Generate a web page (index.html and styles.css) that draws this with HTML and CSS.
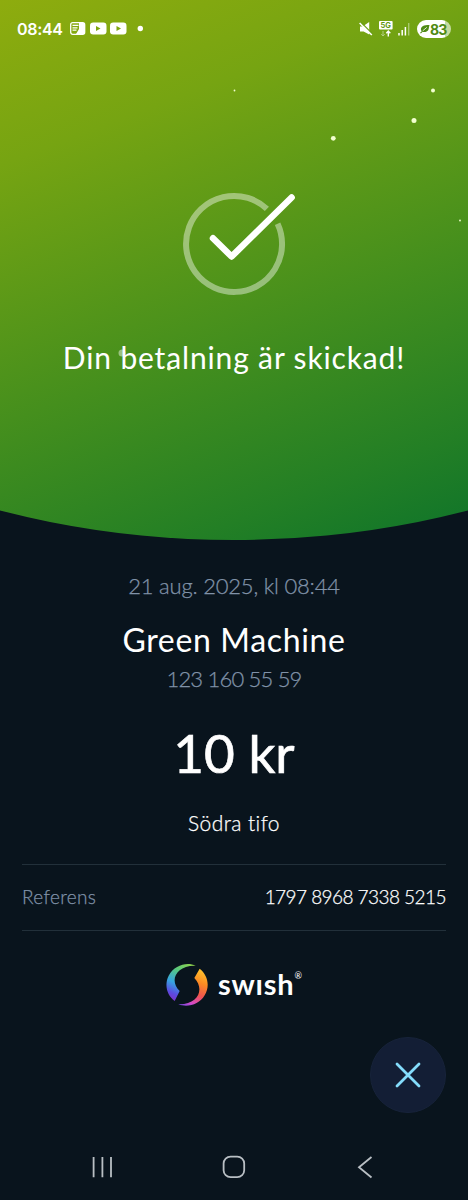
FILE: index.html
```html
<!DOCTYPE html>
<html lang="sv">
<head>
    <meta charset="UTF-8">
    <meta name="viewport" content="width=device-width, initial-scale=1.0">
    <title>Swish</title>
    <link rel="stylesheet" href="styles.css">
</head>
<body>
    <header class="hero">
        <svg class="stars" viewBox="0 0 468 540">
            <circle cx="234.5" cy="90.5" r="0.9"/>
            <circle cx="433" cy="90.5" r="2"/>
            <circle cx="414" cy="120.5" r="2.5"/>
            <circle cx="333.3" cy="138.3" r="2.4"/>
            <circle cx="460" cy="220.5" r="0.9"/>
            <circle class="faint" cx="122" cy="353" r="3.5"/>
            <circle cx="169" cy="368.5" r="2"/>
        </svg>

        <div class="status-bar">
            <div class="status-left">
                <span class="clock">08:44</span>
                <svg class="apps" width="76" height="14" viewBox="0 0 76 14">
                    <rect x="0.7" y="0.7" width="14" height="11.6" rx="2" fill="none" stroke="#fff" stroke-width="1.3"/>
                    <path d="M9 1h6v11H6l3-5z" fill="#fff"/>
                    <path d="M2.5 3.4h6M2.5 5.8h5M2.5 8.2h4" stroke="#fff" stroke-width="1.2"/>
                    <rect x="20" y="0.5" width="16.5" height="12" rx="3.2" fill="#fff"/>
                    <path d="M26 4v5l4.5-2.5z" fill="#7ea60f"/>
                    <rect x="40" y="0.5" width="16.5" height="12" rx="3.2" fill="#fff"/>
                    <path d="M46.5 4v5l4.5-2.5z" fill="#7ea60f"/>
                    <circle cx="70.3" cy="6.5" r="2.7" fill="#fff"/>
                </svg>
            </div>
            <div class="status-right">
                <svg width="14" height="14" viewBox="0 0 14 14">
                    <path d="M1 4.5h2.600L10.200 0v12.500L4.600 9.500H1z" fill="#fff"/>
                    <path d="M1.800 0.200l12 12" stroke="#6ba014" stroke-width="1.300"/>
                    <path d="M0.600 1l12.200 12" stroke="#fff" stroke-width="1.600"/>
                </svg>
                <svg class="network" width="14" height="16" viewBox="0 0 14 16">
                    <rect x="0" y="0" width="13.6" height="8.6" rx="1" fill="#fff"/>
                    <text x="6.8" y="7.1" text-anchor="middle">5G</text>
                    <path d="M4 10v5M2.300 13.200L4 15l1.700-1.800" stroke="#b5d082" stroke-width="1" fill="none"/>
                    <path d="M9.300 15.500v-5M7.300 12.300l2-2.200 2 2.200" stroke="#fff" stroke-width="1.400" fill="none"/>
                </svg>
                <svg class="signal" width="12" height="13" viewBox="0 0 12 13">
                    <path d="M1 10v2.500M4.200 7v5.500M7.400 4v8.500" stroke="#fff" stroke-width="1.500"/>
                    <path d="M10.700 0v12.500" stroke="#a9c970" stroke-width="1.400"/>
                </svg>
                <span class="battery">
                    <svg width="10" height="10" viewBox="0 0 11 10">
                        <path d="M10.500 0.500C4 0.500 1 2 1 5.500c0 3 5 4 7.500 1.500C10 5.500 9.500 3 10.500 0.500z" fill="#4f8a14"/>
                        <path d="M0.500 9.500L6.500 4" stroke="#4f8a14" stroke-width="1.200"/>
                        <path d="M3 7L7.500 3.200" stroke="#fff" stroke-width="0.900"/>
                    </svg>
                    <span>83</span>
                </span>
            </div>
        </div>

        <svg class="check" width="140" height="125" viewBox="164 180 140 125">
            <path class="check-ring" d="M266.900 208.900A48 48 0 1 0 277.600 223.700"/>
            <path class="check-mark" d="M213 238.300l18.600 18.200L291.600 197.500"/>
        </svg>
        <h1>Din betalning är skickad!</h1>
    </header>

    <main>
        <p class="date">21 aug. 2025, kl 08:44</p>
        <h2>Green Machine</h2>
        <p class="phone">123 160 55 59</p>
        <p class="amount">10 kr</p>
        <p class="message">Södra tifo</p>

        <div class="reference">
            <span class="label">Referens</span>
            <span class="value">1797 8968 7338 5215</span>
        </div>

        <div class="brand">
            <svg width="44" height="44" viewBox="30 24 132 132">
                <defs>
                    <linearGradient id="cool" gradientUnits="userSpaceOnUse" x1="110" y1="26" x2="55" y2="136">
                        <stop offset="0" stop-color="#8fd14a"/>
                        <stop offset="0.3" stop-color="#56c881"/>
                        <stop offset="0.6" stop-color="#36a5e0"/>
                        <stop offset="0.85" stop-color="#5b4be0"/>
                        <stop offset="1" stop-color="#7a35c8"/>
                    </linearGradient>
                    <linearGradient id="warm" gradientUnits="userSpaceOnUse" x1="130" y1="42" x2="82" y2="152">
                        <stop offset="0" stop-color="#ffc02c"/>
                        <stop offset="0.3" stop-color="#fb8a23"/>
                        <stop offset="0.6" stop-color="#f0544f"/>
                        <stop offset="0.85" stop-color="#d54ac8"/>
                        <stop offset="1" stop-color="#7b48e0"/>
                    </linearGradient>
                </defs>
                <path d="M122 32C96 20 58 30 41 62C27 90 36 121 59 138L74 108C42 78 62 30 122 32z" fill="url(#cool)"/>
                <path d="M134 41C158 60 166 92 149 121C133 149 97 159 70 148C130 150 150 102 118 69z" fill="url(#warm)"/>
            </svg>
            <span class="brand-name">swısh</span>
            <span class="registered">®</span>
        </div>

        <button class="close" aria-label="Stäng">
            <svg width="26" height="26" viewBox="0 0 26 26">
                <path d="M2 2l22 22M24 2L2 24"/>
            </svg>
        </button>
    </main>

    <nav>
        <svg width="24" height="24" viewBox="0 0 24 24">
            <path d="M3.600 2v20.300M12.400 2v20.300M21 2v20.300"/>
        </svg>
        <svg width="24" height="24" viewBox="0 0 24 24">
            <rect x="1.600" y="1.600" width="20.600" height="20.600" rx="7"/>
        </svg>
        <svg width="24" height="24" viewBox="0 0 24 24">
            <path d="M18.500 2L6 12.300l12.500 10.200"/>
        </svg>
    </nav>
</body>
</html>
```

FILE: styles.css
```css
* {
    box-sizing: border-box;
    margin: 0;
    padding: 0;
}
body {
    display: flex;
    flex-direction: column;
    height: 1200px;
    background-color: #09141d;
    color: #fff;
    font-family: Lato, "Liberation Sans", sans-serif;
    font-variant-ligatures: none;
    overflow: hidden;
}
svg {
    display: block;
    flex-shrink: 0;
}

/* green top with curved bottom edge */
.hero {
    position: relative;
    display: flex;
    flex-direction: column;
    align-items: center;
    height: 540px;
    background: linear-gradient(159deg, #8eac0e 0%, #76a412 23%, #458f1d 59%, #237f25 85%, #147729 96%);
    clip-path: circle(943px at 50% -403px);
}
.stars {
    position: absolute;
    top: 0;
    left: 0;
    width: 100%;
    height: 100%;
    fill: #f2ffd0;
}
.stars .faint {
    fill: rgba(255, 255, 255, 0.45);
}
.status-bar {
    display: flex;
    justify-content: space-between;
    align-items: center;
    width: 100%;
    height: 58px;
    padding: 0 17px;
}
.status-left,
.status-right {
    display: flex;
    align-items: center;
}
.clock {
    width: 53px;
    font-family: Inter, sans-serif;
    font-size: 16px;
    font-weight: 600;
    letter-spacing: -0.3px;
}
.network {
    margin: -1px 0 0 6px;
}
.network text {
    font: 700 7.5px Inter, sans-serif;
    fill: #5f9712;
}
.signal {
    margin: 1px 7px 0 5px;
}
.battery {
    display: flex;
    align-items: center;
    width: 34px;
    height: 18px;
    padding-left: 3px;
    border-radius: 9px;
    background: linear-gradient(90deg, #fff 83%, #c5dba0 83%);
    color: #4f8a14;
    font-family: Inter, sans-serif;
    font-size: 14px;
    font-weight: 700;
    letter-spacing: -0.8px;
}
.check {
    margin-top: 122px;
    fill: none;
}
.check-ring {
    stroke: rgba(255, 255, 255, 0.42);
    stroke-width: 6;
}
.check-mark {
    stroke: #fff;
    stroke-width: 6.5;
    stroke-linecap: round;
    stroke-linejoin: round;
}
h1 {
    margin-top: 32px;
    font-size: 30px;
    font-weight: 400;
    line-height: 40px;
    letter-spacing: 0.85px;
}

main {
    display: flex;
    flex-direction: column;
    align-items: center;
    padding: 0 22px;
}
.date,
.phone,
.message,
.reference {
    -webkit-text-stroke: 0.25px currentColor;
}
.date {
    margin-top: 30px;
    color: #8092a8;
    font-size: 22px;
    font-weight: 300;
    line-height: 32px;
    letter-spacing: -0.2px;
}
h2 {
    margin-top: 18px;
    font-size: 32px;
    font-weight: 400;
    line-height: 40px;
    letter-spacing: 0.65px;
}
.phone {
    margin-top: 4px;
    color: #8092a8;
    font-size: 22px;
    font-weight: 300;
    line-height: 30px;
    letter-spacing: -0.8px;
}
.amount {
    margin-top: 28px;
    font-size: 53px;
    font-weight: 400;
    line-height: 62px;
    -webkit-text-stroke: 0.7px currentColor;
}
.message {
    margin-top: 24px;
    font-size: 21px;
    font-weight: 300;
    line-height: 30px;
    letter-spacing: 0.4px;
}
.reference {
    display: flex;
    justify-content: space-between;
    align-items: center;
    width: 100%;
    height: 67px;
    margin-top: 26px;
    padding-bottom: 2px;
    border-top: 1px solid #22303a;
    border-bottom: 1px solid #22303a;
    font-size: 19px;
    font-weight: 300;
}
.label {
    color: #8092a8;
    letter-spacing: 0.35px;
}
.value {
    letter-spacing: -0.55px;
}
.brand {
    display: flex;
    align-items: center;
    width: 138px;
    height: 44px;
    margin-top: 32px;
}
.brand-name {
    margin: -3px 0 0 9px;
    font-size: 29px;
    font-weight: 700;
    line-height: 44px;
    letter-spacing: 0.8px;
}
.registered {
    align-self: flex-start;
    margin-top: 8px;
    font-size: 9px;
    line-height: 10px;
}
.close {
    display: flex;
    align-self: flex-end;
    align-items: center;
    justify-content: center;
    width: 76px;
    height: 76px;
    margin-top: 30px;
    border: 1px solid #17233a;
    border-radius: 50%;
    background-color: #131e35;
}
.close path {
    stroke: #84dcfb;
    stroke-width: 2.8;
    stroke-linecap: round;
}

nav {
    display: flex;
    justify-content: space-between;
    margin-top: 42px;
    padding: 0 91px 0 90px;
    fill: none;
    stroke: #b9bfc4;
    stroke-width: 1.8;
}
```
